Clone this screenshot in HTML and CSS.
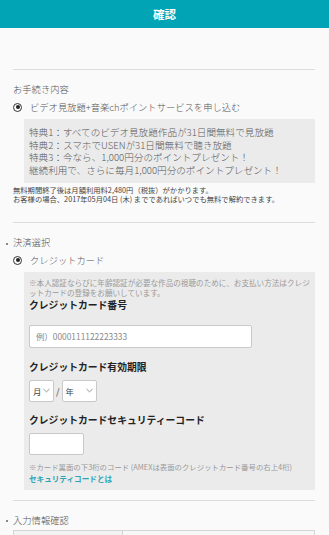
FILE: index.html
```html
<!DOCTYPE html>
<html lang="ja">
<head>
<meta charset="utf-8">
<title>確認</title>
<link rel="stylesheet" href="styles.css">
</head>
<body>
<header class="topbar">確認</header>
<main class="content">
  <section class="sec sec-first">
    <h2 class="sec-title">お手続き内容</h2>
    <div class="radio-row"><span class="radio"></span><span>ビデオ見放題+音楽chポイントサービスを申し込む</span></div>
    <div class="benefits">
      <p>特典1：すべてのビデオ見放題作品が31日間無料で見放題</p>
      <p>特典2：スマホでUSENが31日間無料で聴き放題</p>
      <p>特典3：今なら、1,000円分のポイントプレゼント！</p>
      <p>継続利用で、さらに毎月1,000円分のポイントプレゼント！</p>
    </div>
    <p class="notice">無料期間終了後は月額利用料2,480円（税抜）がかかります。<br>お客様の場合、2017年05月04日 (木) までであればいつでも無料で解約できます。</p>
  </section>
  <section class="sec sec-pay">
    <h2 class="sec-title bullet">決済選択</h2>
    <div class="radio-row"><span class="radio"></span><span>クレジットカード</span></div>
    <div class="card-box">
      <p class="card-note">※本人認証ならびに年齢認証が必要な作品の視聴のために、お支払い方法はクレジットカードの登録をお願いしています。</p>
      <h3 class="field-label">クレジットカード番号</h3>
      <div class="input input-number">例）0000111122223333</div>
      <h3 class="field-label label-exp">クレジットカード有効期限</h3>
      <div class="exp-row">
        <div class="select sel-month"><span>月</span><svg class="chev" viewBox="0 0 8 5" width="7" height="5"><path d="M0.5 0.8 L4 4 L7.5 0.8" fill="none" stroke="#777" stroke-width="0.9"/></svg></div>
        <span class="slash">/</span>
        <div class="select sel-year"><span>年</span><svg class="chev" viewBox="0 0 8 5" width="7" height="5"><path d="M0.5 0.8 L4 4 L7.5 0.8" fill="none" stroke="#777" stroke-width="0.9"/></svg></div>
      </div>
      <h3 class="field-label label-cvc">クレジットカードセキュリティーコード</h3>
      <div class="input input-cvc"></div>
      <p class="cvc-note">※カード裏面の下3桁のコード (AMEXは表面のクレジットカード番号の右上4桁)</p>
      <a class="cvc-link">セキュリティコードとは</a>
    </div>
  </section>
  <section class="sec sec-confirm">
    <h2 class="sec-title bullet">入力情報確認</h2>
    <div class="info-table">
      <div class="cell cell-head"></div>
      <div class="cell"></div>
    </div>
  </section>
</main>
</body>
</html>
```
FILE: styles.css
```css
* { box-sizing: border-box; }
html, body { margin: 0; padding: 0; }
body {
  background: #fafafa;
  font-family: "Noto Sans CJK JP", "Noto Sans", sans-serif;
  color: #444;
  width: 329px;
  height: 535px;
  overflow: hidden;
}
.topbar {
  height: 28px;
  background: #00a4b5;
  color: #fff;
  font-weight: bold;
  font-size: 11.5px;
  line-height: 28px;
  text-align: center;
}
.content {
  padding: 0 14px 0 13px;
}
.sec {
  border-top: 1px solid #dcdcdc;
  padding-top: 13px;
}
.sec-first {
  margin-top: 41px;
  padding-bottom: 18px;
}
.sec-title {
  margin: 0;
  font-size: 9.3px;
  font-weight: 300;
  line-height: 12px;
  color: #555;
}
.bullet::before {
  content: "";
  display: inline-block;
  width: 2px;
  height: 2px;
  background: #888;
  margin-left: -7px;
  margin-right: 5px;
  vertical-align: middle;
}
.radio-row {
  display: flex;
  align-items: center;
  gap: 8px;
  margin-top: 6px;
  font-size: 9.3px;
  font-weight: 300;
  line-height: 12px;
  color: #555;
}
.radio {
  width: 9px;
  height: 9px;
  border: 1px solid #333;
  border-radius: 50%;
  display: flex;
  align-items: center;
  justify-content: center;
  flex: none;
}
.radio::after {
  content: "";
  width: 4px;
  height: 4px;
  border-radius: 50%;
  background: #222;
}
.benefits {
  margin: 6px 0 0 11px;
  background: #ebebeb;
  padding: 7px 5px;
}
.benefits p {
  margin: 0;
  font-size: 9.6px;
  font-weight: 300;
  line-height: 12.5px;
  color: #5a5a5a;
  white-space: nowrap;
}
.notice {
  margin: 3px 0 0;
  font-size: 7.3px;
  line-height: 9.2px;
  color: #444;
  white-space: nowrap;
}
.sec-pay {
  padding-bottom: 10px;
}
.card-box {
  margin: 6px 0 0 11px;
  background: #ebebeb;
  padding: 6px 5px 6px 5px;
}
.card-note {
  margin: 0;
  font-size: 7.6px;
  line-height: 9.8px;
  color: #999;
}
.field-label {
  margin: 1px 0 0;
  font-size: 9.8px;
  font-weight: bold;
  line-height: 13px;
  color: #222;
}
.input {
  background: #fff;
  border: 1px solid #c9c9c9;
  border-radius: 2px;
  height: 23px;
}
.input-number {
  margin-top: 13px;
  width: 223px;
  font-size: 8.4px;
  line-height: 21px;
  padding-left: 6px;
  color: #888;
}
.label-exp {
  margin-top: 13px;
}
.exp-row {
  display: flex;
  align-items: center;
  margin-top: 4px;
}
.select {
  display: flex;
  align-items: center;
  justify-content: space-between;
  height: 22px;
  background: #fff;
  border: 1px solid #c9c9c9;
  border-radius: 2px;
  padding: 0 3px;
  font-size: 8.4px;
  color: #444;
}
.sel-month { width: 25px; }
.sel-year { width: 35px; }
.slash {
  font-size: 9px;
  color: #444;
  margin: 0 2px;
  line-height: 22px;
  padding-top: 3px;
}
.label-cvc {
  margin-top: 11px;
}
.input-cvc {
  margin-top: 6px;
  width: 55px;
  height: 22px;
}
.cvc-note {
  margin: 7px 0 0;
  font-size: 7.4px;
  line-height: 9.5px;
  color: #999;
  white-space: nowrap;
}
.cvc-link {
  display: block;
  margin-top: 2px;
  font-size: 7.6px;
  line-height: 10px;
  font-weight: bold;
  color: #2ea3b5;
}
.sec-confirm {
  padding-top: 13px;
}
.info-table {
  margin-top: 4px;
  display: grid;
  grid-template-columns: 109px 1fr;
  border: 1px solid #d5d5d5;
  height: 20px;
}
.cell { background: #f7f7f7; }
.cell-head {
  border-right: 1px solid #d5d5d5;
  background: #f2f2f2;
}
```
